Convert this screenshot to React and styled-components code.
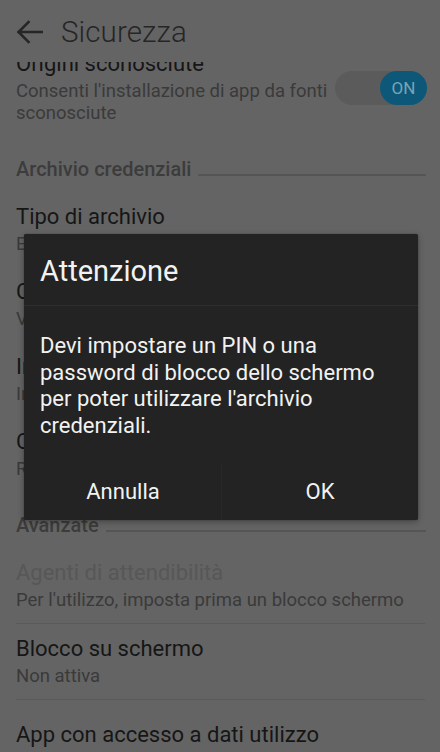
import styled, { createGlobalStyle } from 'styled-components';

const GlobalStyle = createGlobalStyle`
  * { box-sizing: border-box; }
  html, body { margin: 0; padding: 0; background: #646464; }
  body { font-family: Roboto, 'Noto Sans', 'Liberation Sans', sans-serif; }
`;

const Screen = styled.div`
  position: relative;
  width: 440px;
  height: 752px;
  overflow: hidden;
  background: #646464;
  display: flex;
  flex-direction: column;
`;

const Header = styled.header`
  height: 62px;
  flex-shrink: 0;
  display: flex;
  align-items: center;
  gap: 18px;
  padding: 2px 0 0 17px;
  background: #646464;
  position: relative;
  z-index: 1;
`;

const HeaderTitle = styled.h1`
  margin: 0;
  font-size: 29.5px;
  font-weight: 300;
  color: #262626;
  letter-spacing: 0.1px;
`;

const List = styled.div`
  flex: 1;
  overflow: hidden;
`;

const Scroller = styled.div`
  margin-top: -23px;
`;

const Item = styled.div`
  display: flex;
  align-items: center;
  justify-content: space-between;
  padding: ${(p) => (p.$single ? '22px 16px' : '12px 13px 11px 16px')};
  border-bottom: 1px solid ${(p) => (p.$divider ? '#5a5a5a' : 'transparent')};
  ${(p) =>
    p.$divider &&
    `
    margin: 0 15px 0 16px;
    padding: 12px 0 12px 0;
  `}
`;

const ItemText = styled.div`
  display: flex;
  flex-direction: column;
  min-width: 0;
`;

const Title = styled.div`
  font-size: 22px;
  line-height: 26px;
  color: ${(p) => (p.$disabled ? '#575757' : '#161616')};
  white-space: nowrap;
`;

const Sub = styled.div`
  margin-top: 3px;
  font-size: 18.5px;
  line-height: 22px;
  color: #3a3a3a;
  max-width: ${(p) => p.$max || 'none'};
`;

const Section = styled.div`
  display: flex;
  align-items: flex-end;
  gap: 7px;
  padding: 20px 14px 10px 16px;
`;

const SectionTitle = styled.div`
  font-size: 20px;
  font-weight: 500;
  line-height: 26px;
  color: #3c3c3c;
  white-space: nowrap;
`;

const SectionLine = styled.div`
  flex: 1;
  height: 2px;
  margin-bottom: 6px;
  background: #555555;
`;

const Toggle = styled.div`
  width: 92px;
  height: 34px;
  border-radius: 17px;
  background: #5b5b5b;
  display: flex;
  justify-content: flex-end;
  flex-shrink: 0;
`;

const Knob = styled.div`
  width: 47px;
  height: 34px;
  border-radius: 17px;
  background: #0d5878;
  color: #7aa3b4;
  font-size: 17px;
  display: flex;
  align-items: center;
  justify-content: center;
`;

const Dialog = styled.div`
  position: absolute;
  left: 24px;
  top: 234px;
  width: 394px;
  height: 286px;
  background: #232323;
  border-radius: 2px;
  box-shadow: 0 2px 6px rgba(0, 0, 0, 0.3), 0 0 1px rgba(0, 0, 0, 0.6);
  display: flex;
  flex-direction: column;
  z-index: 2;
`;

const DialogTitle = styled.div`
  padding: 19px 16px 16px;
  font-size: 29px;
  line-height: 36px;
  color: #f2f2f2;
  border-bottom: 1px solid #2e2e2e;
`;

const DialogBody = styled.div`
  padding: 27px 16px 0;
  font-size: 22px;
  line-height: 26.5px;
  color: #f2f2f2;
  flex: 1;
`;

const Buttons = styled.div`
  display: grid;
  grid-template-columns: 1fr 1fr;
  height: 57px;
`;

const DialogButton = styled.div`
  display: flex;
  align-items: center;
  justify-content: center;
  font-size: 22px;
  color: #f2f2f2;
  border-left: 1px solid ${(p) => (p.$split ? '#282828' : 'transparent')};
`;

const BackArrow = () => (
  <svg width="26" height="24" viewBox="0 0 26 24" fill="none">
    <path
      d="M1.5 12H25M11.5 2L1.5 12l10 10"
      stroke="#262626"
      strokeWidth="2.6"
      strokeLinecap="square"
    />
  </svg>
);

const credItems = [
  { title: 'Tipo di archivio', sub: 'Eseguito backup su hardware' },
  { title: 'Credenziali attendibili', sub: 'Visualizza certificati CA attendibili' },
  { title: 'Installa da scheda SD', sub: 'Installa certificati da scheda SD' },
  { title: 'Cancella credenziali', sub: 'Rimuovi tutti i certificati' },
];

const App = () => {
  return (
    <>
      <GlobalStyle />
      <Screen>
        <Header>
          <BackArrow />
          <HeaderTitle>Sicurezza</HeaderTitle>
        </Header>

        <List>
          <Scroller>
            <Item>
              <ItemText>
                <Title>Origini sconosciute</Title>
                <Sub $max='320px'>Consenti l'installazione di app da fonti sconosciute</Sub>
              </ItemText>
              <Toggle>
                <Knob>ON</Knob>
              </Toggle>
            </Item>

            <Section>
              <SectionTitle>Archivio credenziali</SectionTitle>
              <SectionLine />
            </Section>

            {credItems.map((item) => (
              <Item key={item.title}>
                <ItemText>
                  <Title>{item.title}</Title>
                  <Sub>{item.sub}</Sub>
                </ItemText>
              </Item>
            ))}

            <Section>
              <SectionTitle>Avanzate</SectionTitle>
              <SectionLine />
            </Section>

            <Item $divider>
              <ItemText>
                <Title $disabled>Agenti di attendibilità</Title>
                <Sub>Per l'utilizzo, imposta prima un blocco schermo</Sub>
              </ItemText>
            </Item>

            <Item $divider>
              <ItemText>
                <Title>Blocco su schermo</Title>
                <Sub>Non attiva</Sub>
              </ItemText>
            </Item>

            <Item $single>
              <Title>App con accesso a dati utilizzo</Title>
            </Item>
          </Scroller>
        </List>

        <Dialog>
          <DialogTitle>Attenzione</DialogTitle>
          <DialogBody>
            Devi impostare un PIN o una password di blocco dello schermo per
            poter utilizzare l'archivio credenziali.
          </DialogBody>
          <Buttons>
            <DialogButton>Annulla</DialogButton>
            <DialogButton $split>OK</DialogButton>
          </Buttons>
        </Dialog>
      </Screen>
    </>
  );
};

export default App;
